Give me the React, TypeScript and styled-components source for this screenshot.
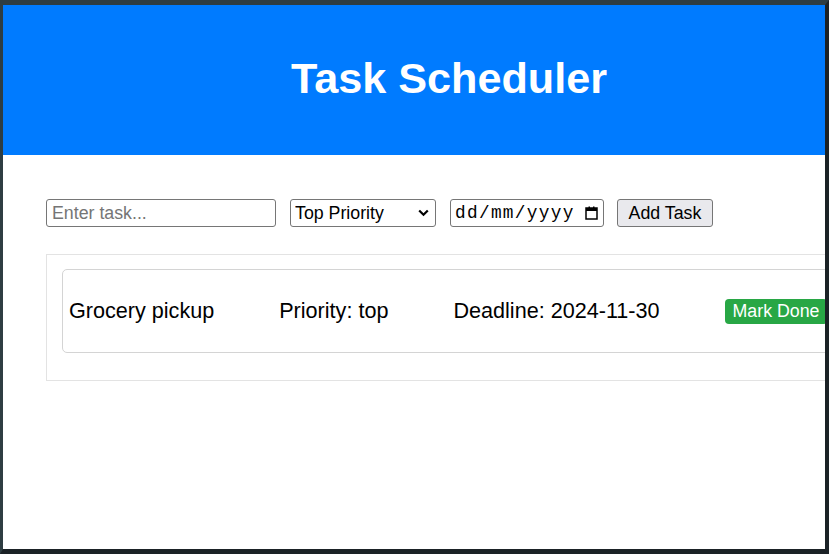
import React, { useState } from 'react';
import styled, { createGlobalStyle } from 'styled-components';

const GlobalStyle = createGlobalStyle`
  html, body {
    margin: 0;
    padding: 0;
    background: #1c2428;
  }
`;

// Browser window frame around the page
const Frame = styled.div`
  width: 829px;
  height: 554px;
  box-sizing: border-box;
  border-style: solid;
  border-width: 5px 4px 5px 3px;
  border-color: #2e3d42 #1b2226 #1b2226 #2e3d42;
  background: #ffffff;
  overflow: hidden;
`;

const Page = styled.div`
  width: 892px;
  font-family: 'Liberation Sans', Arial, sans-serif;
  color: #000;
`;

const Header = styled.header`
  height: 150px;
  background-color: #007bff;
  display: flex;
  align-items: center;
  justify-content: center;
  padding-bottom: 2px;
  box-sizing: border-box;
`;

const Title = styled.h1`
  margin: 0;
  font-size: 43.2px;
  line-height: 1;
  font-weight: 700;
  color: #ffffff;
`;

const Main = styled.main`
  padding: 44px 43px;
`;

const Form = styled.form`
  display: flex;
  align-items: center;
  gap: 14px;
`;

const fieldBase = `
  box-sizing: border-box;
  height: 28px;
  border: 1px solid #767676;
  border-radius: 3px;
  font-family: 'Liberation Sans', Arial, sans-serif;
  font-size: 17.78px;
  background: #fff;
  color: #000;
`;

const TaskInput = styled.input`
  ${fieldBase}
  width: 230px;
  padding: 0 5px;

  &::placeholder {
    color: #757575;
  }
`;

const SelectWrap = styled.div`
  position: relative;
  display: flex;
`;

const PrioritySelect = styled.select`
  ${fieldBase}
  width: 146px;
  padding: 0 4px;
  appearance: none;
  -webkit-appearance: none;
`;

const Chevron = styled.svg`
  position: absolute;
  right: 7px;
  top: 10px;
  pointer-events: none;
`;

const DateField = styled.label`
  ${fieldBase}
  width: 154px;
  display: flex;
  align-items: center;
  justify-content: space-between;
  padding: 0 5px 0 4px;
`;

const DateText = styled.input`
  border: none;
  outline: none;
  width: 124px;
  padding: 0;
  background: transparent;
  font-family: 'Liberation Mono', 'DejaVu Sans Mono', monospace;
  font-size: 17.78px;
  letter-spacing: 1.3px;

  &::placeholder {
    color: #000;
  }
`;

const AddButton = styled.button`
  box-sizing: border-box;
  height: 28px;
  width: 96px;
  border: 1px solid #767676;
  border-radius: 3px;
  background: #e9e9ed;
  font-family: 'Liberation Sans', Arial, sans-serif;
  font-size: 17.78px;
  color: #000;
  padding: 0;
  margin-left: -1px;
`;

const TaskList = styled.div`
  margin-top: 27px;
  border: 1px solid #e3e3e3;
  padding: 14px 13px 14px 15px;
`;

const TaskCard = styled.div`
  display: flex;
  align-items: center;
  gap: 65px;
  height: 84px;
  box-sizing: border-box;
  padding: 0 6px;
  border: 1px solid #d4d4d4;
  border-radius: 5px;
  margin-bottom: 13px;
  font-size: 21.6px;
  white-space: nowrap;
`;

const DoneButton = styled.button`
  height: 25px;
  padding: 0 8px;
  border: none;
  border-radius: 4px;
  background-color: #28a745;
  color: #fff;
  font-family: 'Liberation Sans', Arial, sans-serif;
  font-size: 17.78px;
  line-height: 25px;
`;

const CalendarIcon = () => (
  <svg width="13" height="14" viewBox="0 0 13 14" aria-hidden="true">
    <rect x="1" y="2" width="11" height="11" fill="none" stroke="#000" strokeWidth="1.5" />
    <rect x="1" y="2" width="11" height="3" fill="#000" />
    <rect x="3.5" y="0.5" width="1.5" height="2" fill="#000" />
    <rect x="8" y="0.5" width="1.5" height="2" fill="#000" />
  </svg>
);

type Task = { name: string; priority: string; deadline: string };

const App: React.FC = () => {
  const [tasks] = useState<Task[]>([
    { name: 'Grocery pickup', priority: 'top', deadline: '2024-11-30' },
  ]);

  return (
    <>
      <GlobalStyle />
      <Frame>
        <Page>
          <Header>
            <Title>Task Scheduler</Title>
          </Header>
          <Main>
            <Form onSubmit={e => e.preventDefault()}>
              <TaskInput type="text" placeholder="Enter task..." />
              <SelectWrap>
                <PrioritySelect defaultValue="top">
                  <option value="top">Top Priority</option>
                  <option value="middle">Middle Priority</option>
                  <option value="low">Low Priority</option>
                </PrioritySelect>
                <Chevron width="11" height="8" viewBox="0 0 11 8" aria-hidden="true">
                  <path d="M1.2 1.5 L5.5 5.8 L9.8 1.5" fill="none" stroke="#000" strokeWidth="2.2" />
                </Chevron>
              </SelectWrap>
              <DateField>
                <DateText type="text" placeholder="dd/mm/yyyy" />
                <CalendarIcon />
              </DateField>
              <AddButton type="submit">Add Task</AddButton>
            </Form>

            <TaskList>
              {tasks.map(task => (
                <TaskCard key={task.name}>
                  <span>{task.name}</span>
                  <span>Priority: {task.priority}</span>
                  <span>Deadline: {task.deadline}</span>
                  <DoneButton>Mark Done</DoneButton>
                </TaskCard>
              ))}
            </TaskList>
          </Main>
        </Page>
      </Frame>
    </>
  );
};

export default App;
